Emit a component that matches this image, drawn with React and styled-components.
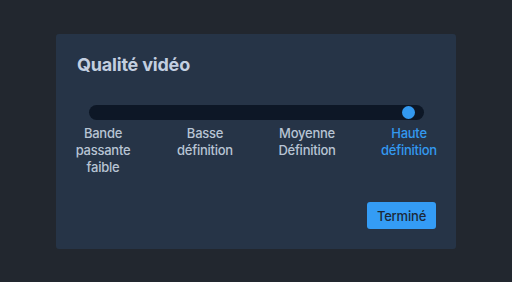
import React, { useState } from "react";
import styled, { createGlobalStyle } from "styled-components";

const GlobalStyle = createGlobalStyle`
  html, body {
    margin: 0;
    background: #22272f;
    font-family: Inter, "Noto Sans", "Liberation Sans", sans-serif;
  }
`;

const STOPS = [
  "Bande passante faible",
  "Basse définition",
  "Moyenne Définition",
  "Haute définition",
];

const STEP = 102;
const FIRST = 13.5;

function App() {
  const [value, setValue] = useState(3);

  return (
    <>
      <GlobalStyle />
      <Page>
        <Card>
          <Title>Qualité vidéo</Title>
          <Track>
            <Thumb style={{ left: FIRST + value * STEP - 6.5 }} />
          </Track>
          <Labels>
            {STOPS.map((label, i) => (
              <Label key={label} $active={i === value} onClick={() => setValue(i)}>
                {label}
              </Label>
            ))}
          </Labels>
          <Footer>
            <DoneButton>Terminé</DoneButton>
          </Footer>
        </Card>
      </Page>
    </>
  );
}

export default App;

const Page = styled.div`
  padding: 34px 0 0 56px;
`;

const Card = styled.div`
  width: 400px;
  box-sizing: border-box;
  padding: 20px;
  background: #263447;
  border-radius: 3px;
`;

const Title = styled.h2`
  margin: 0 0 0 1px;
  font-size: 18px;
  line-height: 22px;
  font-weight: 700;
  color: #c3cfe0;
  letter-spacing: -0.2px;
`;

const Track = styled.div`
  position: relative;
  margin: 29px 12px 0 13px;
  height: 15px;
  border-radius: 8px;
  background: #0d1726;
`;

const Thumb = styled.div`
  position: absolute;
  top: 1px;
  width: 13px;
  height: 13px;
  border-radius: 50%;
  background: #3399f0;
`;

const Labels = styled.div`
  display: grid;
  grid-template-columns: repeat(4, ${STEP}px);
  margin: 5px 0 0 -24px;
`;

const Label = styled.div`
  text-align: center;
  font-size: 13px;
  line-height: 17px;
  font-weight: 500;
  letter-spacing: -0.25px;
  color: ${(p) => (p.$active ? "#3399f0" : "#b8c4d4")};
  cursor: pointer;
  padding: 0 14px;
`;

const Footer = styled.div`
  display: flex;
  justify-content: flex-end;
  margin-top: 26px;
`;

const DoneButton = styled.button`
  width: 69px;
  height: 27px;
  border: none;
  border-radius: 3px;
  background: #349cf5;
  color: #1c2838;
  font-family: inherit;
  font-size: 13px;
  font-weight: 500;
  letter-spacing: -0.2px;
  cursor: pointer;
`;
